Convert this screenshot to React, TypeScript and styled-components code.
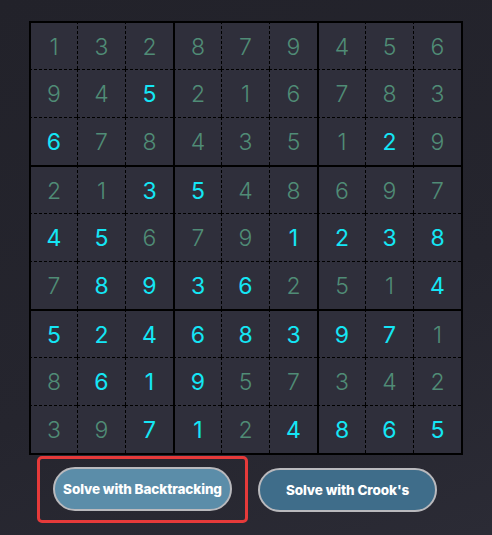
import React from "react";
import styled, { createGlobalStyle } from "styled-components";

const Global = createGlobalStyle`
  html, body { margin: 0; padding: 0; }
  body {
    width: 492px;
    height: 535px;
    overflow: hidden;
    background: linear-gradient(160deg, #22222a 0%, #25252e 60%, #2b2b35 100%);
    font-family: "Inter", "Noto Sans", sans-serif;
  }
`;

const Page = styled.div`
  display: flex;
  flex-direction: column;
  align-items: center;
  padding-top: 21px;
`;

const Column = styled.div`
  width: 434px;
  display: flex;
  flex-direction: column;
`;

const Board = styled.div`
  display: grid;
  grid-template-columns: repeat(9, 48px);
  grid-template-rows: repeat(9, 48px);
  border-right: 2px solid #000;
  border-bottom: 2px solid #000;
  width: 434px;
  box-sizing: border-box;
`;

const Cell = styled.div<{ $col: number; $row: number; $solved: boolean }>`
  box-sizing: border-box;
  background: #2f2f3b;
  border-left: ${(p) => (p.$col % 3 === 0 ? "2px solid #000" : "1px dashed #000")};
  border-top: ${(p) => (p.$row % 3 === 0 ? "2px solid #000" : "1px dashed #000")};
  display: flex;
  align-items: center;
  justify-content: center;
  padding-top: 1px;
  font-size: 23px;
  font-weight: ${(p) => (p.$solved ? 400 : 300)};
  color: ${(p) => (p.$solved ? "#14e6f5" : "#508c76")};
`;

const ButtonRow = styled.div`
  display: flex;
  align-items: center;
  gap: 10px;
  margin-top: 1px;
  padding-left: 8px;
`;

const Focus = styled.div`
  border: 3px solid #e53a3a;
  border-radius: 5px;
  padding: 8px 13px 9px;
  display: flex;
`;

const Button = styled.button<{ $tone: "light" | "dark" }>`
  width: 179px;
  height: 44px;
  box-sizing: border-box;
  border-radius: 22px;
  border: 2px solid #b9b9bd;
  background: ${(p) => (p.$tone === "light" ? "#5b8da9" : "#3f6d8a")};
  color: #fff;
  font-family: "Inter", "Noto Sans", sans-serif;
  font-weight: 800;
  font-size: 13.5px;
  letter-spacing: -0.1px;
  cursor: pointer;
  padding: 0;
`;

const givens = [
  "132879456",
  "945216783",
  "678435129",
  "213548697",
  "456791238",
  "789362514",
  "524683971",
  "861957342",
  "397124865",
];

const solvedMask = [
  "000000000",
  "001000000",
  "100000010",
  "001100000",
  "110001111",
  "011110001",
  "111111110",
  "011100000",
  "001101111",
];

export default function App() {
  return (
    <>
      <Global />
      <Page>
        <Column>
          <Board>
            {givens.map((row, r) =>
              row.split("").map((d, c) => (
                <Cell key={`${r}-${c}`} $row={r} $col={c} $solved={solvedMask[r][c] === "1"}>
                  {d}
                </Cell>
              ))
            )}
          </Board>
          <ButtonRow>
            <Focus>
              <Button $tone="light">Solve with Backtracking</Button>
            </Focus>
            <Button $tone="dark">Solve with Crook's</Button>
          </ButtonRow>
        </Column>
      </Page>
    </>
  );
}
